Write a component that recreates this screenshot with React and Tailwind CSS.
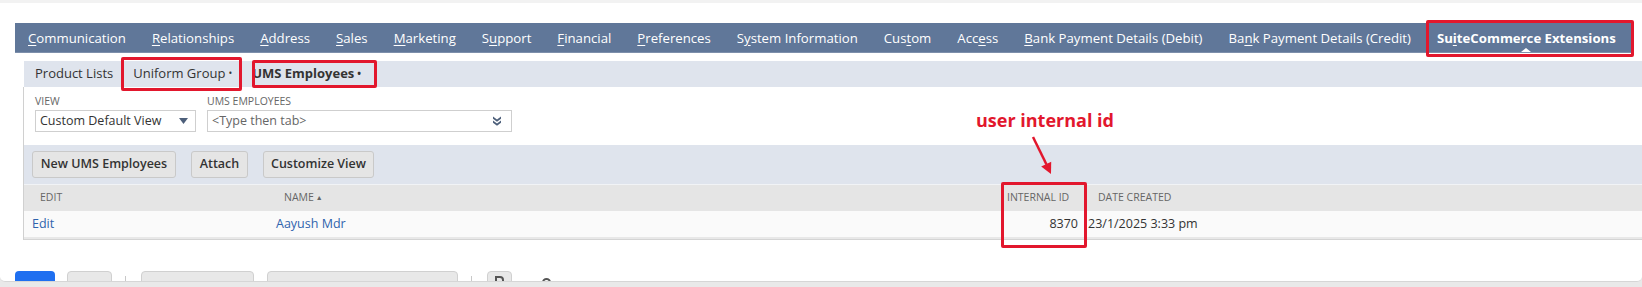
import React from "react";

const navTabs = [
  ["", "C", "ommunication"],
  ["", "R", "elationships"],
  ["", "A", "ddress"],
  ["", "S", "ales"],
  ["", "M", "arketing"],
  ["S", "u", "pport"],
  ["", "F", "inancial"],
  ["", "P", "references"],
  ["S", "y", "stem Information"],
  ["Cus", "t", "om"],
  ["Acc", "e", "ss"],
  ["", "B", "ank Payment Details (Debit)"],
  ["Ba", "n", "k Payment Details (Credit)"],
];

function NavTab({ parts, active }) {
  return (
    <div
      className={`relative px-[13px] text-[13.2px] leading-[30px] text-white whitespace-nowrap ${
        active ? "font-bold" : ""
      }`}
    >
      {parts[0]}
      <u className="underline-offset-[2px] decoration-1">{parts[1]}</u>
      {parts[2]}
      {active && (
        <span className="absolute bottom-0 left-1/2 -translate-x-1/2 w-0 h-0 border-x-[5px] border-b-[4px] border-x-transparent border-b-white" />
      )}
    </div>
  );
}

function SubTab({ label, dot, bold }) {
  return (
    <div className={`px-[10px] text-[13px] text-[#333] whitespace-nowrap ${bold ? "font-bold" : ""}`}>
      {label}
      {dot && <span className="ml-[3px] text-[10px] align-[1px]">•</span>}
    </div>
  );
}

function Btn({ w, children }) {
  return (
    <div
      className={`${w} h-[27px] flex items-center justify-center border border-[#c9c9c9] rounded-[3px] bg-[#e5e5e5] text-[12.5px] font-semibold text-[#333] whitespace-nowrap`}
    >
      {children}
    </div>
  );
}

export default function App() {
  return (
    <div className="relative w-[1642px] h-[287px] overflow-hidden bg-[#e9e9e9] font-['Open_Sans',sans-serif]">
      <div className="h-[282px] bg-white rounded-b-[5px] border-b border-[#d6d6d6]">
        <div className="h-[3px] bg-[#f2f2f2]" />

        {/* main tabs */}
        <nav className="mt-[20px] ml-[15px] w-[1617px] h-[30px] bg-[#607799] flex border-b border-[#7d8fab]">
          {navTabs.map((t) => (
            <NavTab key={t.join("")} parts={t} />
          ))}
          <NavTab parts={["Su", "i", "teCommerce Extensions"]} active />
        </nav>

        {/* sub tabs */}
        <div className="mt-[8px] ml-[24px] h-[26px] bg-[#dfe4ed] flex items-center pl-[1px]">
          <SubTab label="Product Lists" />
          <SubTab label="Uniform Group" dot />
          <SubTab label="UMS Employees" dot bold />
        </div>

        <div className="ml-[23px] border-l border-[#d0d0d0]">
          {/* filters */}
          <div className="h-[58px] pt-[8px] pl-[11px] flex gap-[11px]">
            <div>
              <div className="text-[10.5px] leading-[12px] text-[#666] uppercase">View</div>
              <div className="mt-[3px] w-[161px] h-[22px] border border-[#cfcfcf] flex items-center justify-between pl-[4px] pr-[7px] text-[12.5px] text-[#333]">
                <span>Custom Default View</span>
                <svg width="9" height="6" viewBox="0 0 9 6">
                  <path d="M0 0h9L4.5 6z" fill="#4d5f7a" />
                </svg>
              </div>
            </div>
            <div>
              <div className="text-[10.5px] leading-[12px] text-[#666] uppercase">UMS Employees</div>
              <div className="mt-[3px] w-[305px] h-[22px] border border-[#cfcfcf] flex items-center justify-between pl-[4px] pr-[9px] text-[12.5px] text-[#666]">
                <span>&lt;Type then tab&gt;</span>
                <svg width="10" height="10" viewBox="0 0 10 10">
                  <path d="M1 0.5l4 3 4-3v2.3L5 5.8 1 2.8z M1 4.5l4 3 4-3v2.3L5 9.8 1 6.8z" fill="#4d5f7a" />
                </svg>
              </div>
            </div>
          </div>

          {/* buttons */}
          <div className="h-[40px] bg-[#dfe4ed] pt-[6px] pl-[8px] flex gap-[15px] border-b border-[#f1f3f6]">
            <Btn w="w-[144px]">New UMS Employees</Btn>
            <Btn w="w-[57px]">Attach</Btn>
            <Btn w="w-[111px]">Customize View</Btn>
          </div>

          {/* list header */}
          <div className="h-[26px] bg-[#e5e5e5] flex items-center text-[10.5px] text-[#666] uppercase whitespace-nowrap">
            <div className="w-[244px] pl-[16px]">Edit</div>
            <div className="w-[732px] pl-[16px] flex items-center">
              Name<span className="ml-[2px] text-[7px]">▲</span>
            </div>
            <div className="w-[84px] pl-[7px]">Internal ID</div>
            <div className="pl-[14px]">Date Created</div>
          </div>

          {/* list row */}
          <div className="h-[26px] bg-[#fafafa] flex items-center text-[12.5px] text-[#333] whitespace-nowrap">
            <div className="w-[244px] pl-[8px] text-[#2f63ad]">Edit</div>
            <div className="w-[732px] pl-[8px] text-[#2f63ad]">Aayush Mdr</div>
            <div className="w-[84px] pr-[6px] text-right">8370</div>
            <div className="pl-[4px]">23/1/2025 3:33 pm</div>
          </div>
          <div className="h-[3px] bg-[#e8e8e8] border-b border-[#d4d4d4]" />
        </div>

        {/* cut-off toolbar below */}
        <div className="mt-[31px] h-[10px] overflow-hidden flex items-start">
          <div className="ml-[15px] w-[40px] h-[14px] rounded-t-[4px] bg-[#1f6ff0]" />
          <div className="ml-[12px] w-[45px] h-[14px] rounded-t-[4px] bg-[#e8e8e8] border border-[#d0d0d0]" />
          <div className="ml-[13px] mt-[5px] w-[1px] h-[8px] bg-[#c8c8c8]" />
          <div className="ml-[15px] w-[113px] h-[14px] rounded-t-[4px] bg-[#e8e8e8] border border-[#d0d0d0]" />
          <div className="ml-[13px] w-[191px] h-[14px] rounded-t-[4px] bg-[#e8e8e8] border border-[#d0d0d0]" />
          <div className="ml-[13px] mt-[5px] w-[1px] h-[8px] bg-[#c8c8c8]" />
          <div className="ml-[15px] w-[25px] h-[14px] rounded-t-[4px] bg-[#e8e8e8] border border-[#d0d0d0] flex justify-center">
            <div className="mt-[4px] w-[9px] h-[9px] rounded-tr-[4px] border-2 border-[#555]" />
          </div>
          <div className="ml-[30px] mt-[7px] w-[9px] h-[9px] rounded-t-full border-2 border-[#555]" />
        </div>
      </div>

      {/* annotations */}
      <div className="absolute left-[121px] top-[57px] w-[121px] h-[34px] border-[3px] border-[#e2172d] rounded-[2px]" />
      <div className="absolute left-[252px] top-[60px] w-[125px] h-[28px] border-[3px] border-[#e2172d] rounded-[2px]" />
      <div className="absolute left-[1426px] top-[20px] w-[208px] h-[37px] border-[3px] border-[#e2172d] rounded-[2px]" />
      <div className="absolute left-[1001px] top-[182px] w-[86px] h-[66px] border-[3px] border-[#e2172d] rounded-[2px]" />
      <div className="absolute left-[976px] top-[111px] text-[18px] leading-[18px] font-bold text-[#e2172d] whitespace-nowrap">
        user internal id
      </div>
      <svg className="absolute left-[1024px] top-[134px]" width="36" height="44" viewBox="0 0 36 44">
        <line x1="9" y1="3" x2="22.5" y2="30.5" stroke="#e2172d" strokeWidth="2.5" />
        <path d="M27 40L17.2 32.6L27.2 27.7z" fill="#e2172d" />
      </svg>
    </div>
  );
}
